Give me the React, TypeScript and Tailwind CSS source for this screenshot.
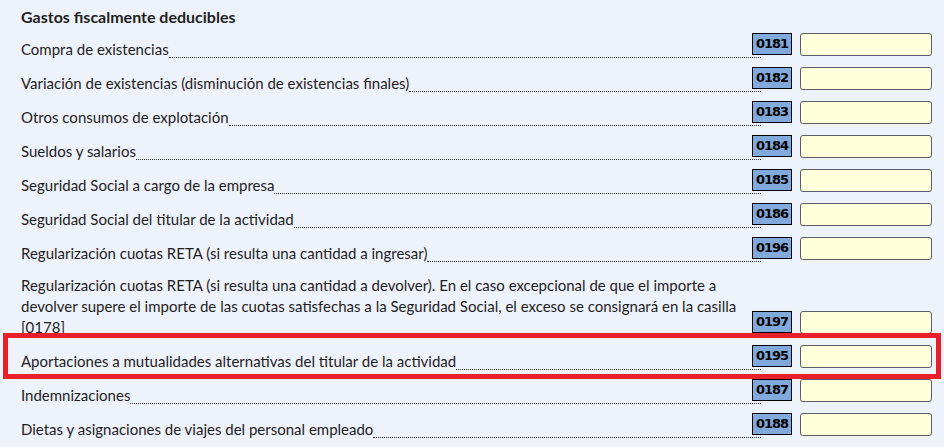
const rows: { code: string; label: string }[] = [
  { code: "0181", label: "Compra de existencias" },
  { code: "0182", label: "Variación de existencias (disminución de existencias finales)" },
  { code: "0183", label: "Otros consumos de explotación" },
  { code: "0184", label: "Sueldos y salarios" },
  { code: "0185", label: "Seguridad Social a cargo de la empresa" },
  { code: "0186", label: "Seguridad Social del titular de la actividad" },
  { code: "0196", label: "Regularización cuotas RETA (si resulta una cantidad a ingresar)" },
  {
    code: "0197",
    label:
      "Regularización cuotas RETA (si resulta una cantidad a devolver). En el caso excepcional de que el importe a devolver supere el importe de las cuotas satisfechas a la Seguridad Social, el exceso se consignará en la casilla [0178]",
  },
  { code: "0195", label: "Aportaciones a mutualidades alternativas del titular de la actividad" },
  { code: "0187", label: "Indemnizaciones" },
  { code: "0188", label: "Dietas y asignaciones de viajes del personal empleado" },
];

function Row({ code, label }: { code: string; label: string }) {
  const long = label.length > 120;
  return (
    <div className={`flex items-end ${long ? "h-[74px]" : "h-[34px]"}`}>
      <div className="w-[740px] flex items-end">
        {long ? (
          <p className="leading-[21px] w-[728px] -mb-[2px]">{label}</p>
        ) : (
          <>
            <span className="leading-[21px] whitespace-nowrap -mb-[2px]">{label}</span>
            <span className="flex-1 border-b border-dotted border-[#333]"></span>
          </>
        )}
      </div>
      <div className="relative -ml-[9px] mb-[3px] w-[40px] h-[22px] bg-[#80aadb] border border-black flex items-center justify-center text-[13px] font-bold text-black font-['DejaVu_Sans',sans-serif] tracking-[-1px]">
        {code}
      </div>
      <div className="ml-[8px] mb-[2px] w-[132px] h-[23px] bg-[#ffffdc] border border-[#5a5f6a] rounded-[3px]"></div>
    </div>
  );
}

export default function App() {
  return (
    <div className="relative w-[944px] h-[447px] overflow-hidden bg-[#eef2fb] text-[#1e1e1e] text-[15px] font-['Lato',sans-serif]">
      <div className="pl-[21px]">
        <div className="h-[24px] pt-[6px] leading-[22px] font-bold text-[16px]">Gastos fiscalmente deducibles</div>
        {rows.map((r) => (
          <Row key={r.code} code={r.code} label={r.label} />
        ))}
      </div>
      <div className="absolute left-[3px] top-[333px] w-[938px] h-[46px] border-[5px] border-[#e8202a]"></div>
    </div>
  );
}
